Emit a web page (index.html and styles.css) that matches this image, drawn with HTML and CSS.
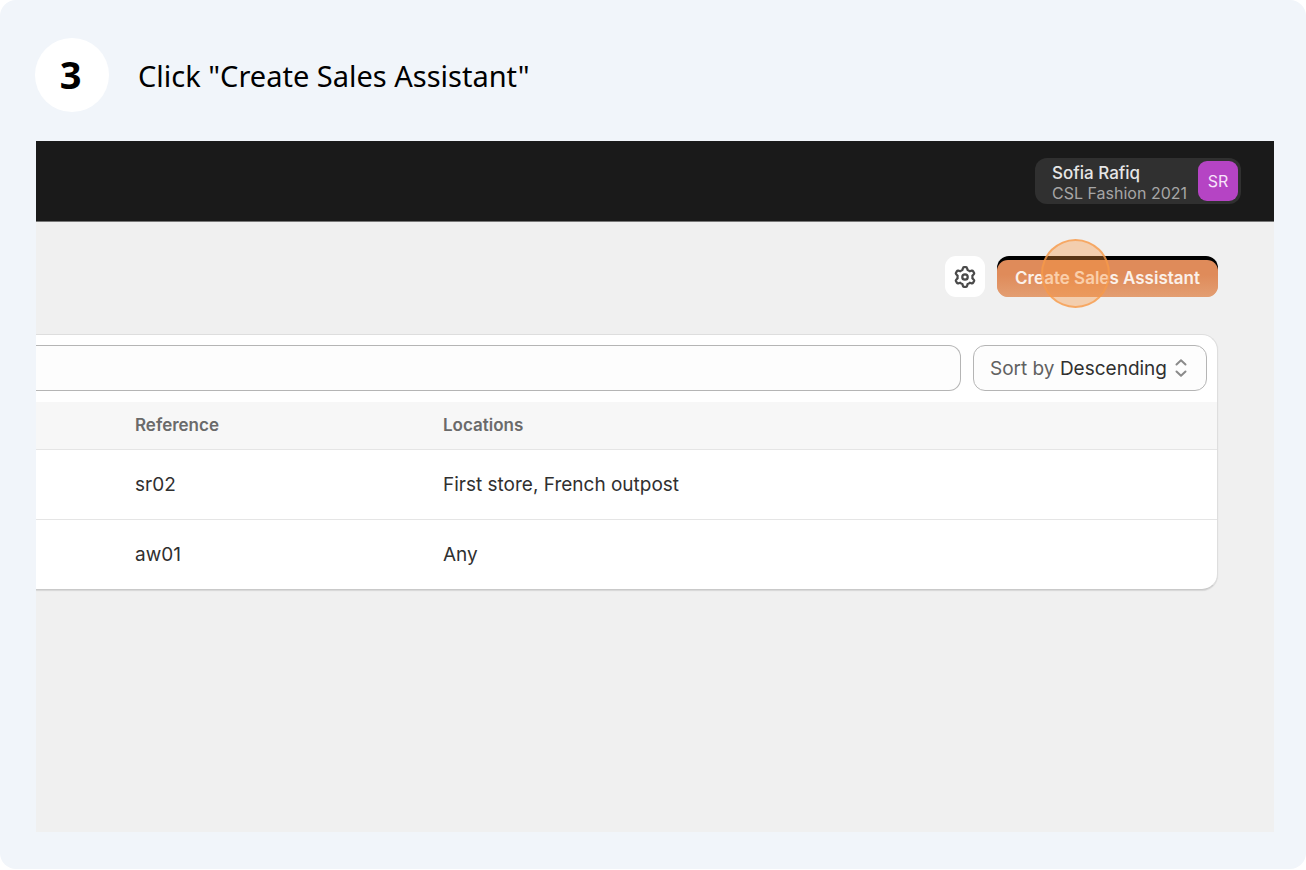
FILE: index.html
```html
<!DOCTYPE html>
<html lang="en">
<head>
<meta charset="utf-8">
<title>Click "Create Sales Assistant"</title>
<link rel="stylesheet" href="styles.css">
</head>
<body>
<main class="step">
  <header class="step-head">
    <span class="step-number">3</span>
    <h1 class="step-title">Click "Create Sales Assistant"</h1>
  </header>
  <section class="screen">
    <div class="topbar">
      <button class="account" type="button">
        <span class="account-text">
          <span class="account-name">Sofia Rafiq</span>
          <span class="account-store">CSL Fashion 2021</span>
        </span>
        <span class="avatar">SR</span>
      </button>
    </div>
    <div class="content">
      <div class="actions">
        <button class="settings" type="button" aria-label="Settings">
          <svg width="26" height="26" viewBox="-12 -12 24 24" fill="none" stroke="#4a4a4a" stroke-width="2.1" stroke-linejoin="round">
            <path d="M-2.4-6.5L-1.900-8.300Q-1.700-9.100-1-9.100H1Q1.700-9.100 1.900-8.300L2.400-6.500Q3.500-6.100 4.400-5.300L6.200-5.800Q7-6 7.400-5.400L8.400-3.700Q8.700-3.100 8.100-2.500L6.800-1.200Q7.100 0 6.800 1.200L8.100 2.500Q8.700 3.100 8.400 3.700L7.400 5.400Q7 6 6.200 5.800L4.400 5.300Q3.500 6.100 2.400 6.500L1.900 8.300Q1.700 9.100 1 9.100H-1Q-1.700 9.100-1.900 8.300L-2.400 6.500Q-3.500 6.100-4.400 5.300L-6.200 5.800Q-7 6-7.400 5.400L-8.400 3.700Q-8.700 3.100-8.100 2.500L-6.800 1.200Q-7.100 0-6.800-1.200L-8.100-2.500Q-8.700-3.100-8.400-3.700L-7.400-5.400Q-7-6-6.200-5.800L-4.400-5.300Q-3.500-6.100-2.400-6.500Z"/>
            <circle r="2.5"/>
          </svg>
        </button>
        <button class="create" type="button"><span class="create-face">Create Sales Assistant</span><span class="click-marker"></span></button>
      </div>
      <div class="panel">
        <div class="filters">
          <input class="search" type="text" aria-label="Search">
          <button class="sort" type="button">
            <span><span class="sort-label">Sort by</span> Descending</span>
            <svg width="14" height="20" viewBox="0 0 14 20" fill="none" stroke="#8a8a8a" stroke-width="2" stroke-linecap="round" stroke-linejoin="round">
              <path d="M2.500 6.500L7 2.200L11.500 6.500M2.500 13.500L7 17.800L11.500 13.500"/>
            </svg>
          </button>
        </div>
        <table class="assistants">
          <thead>
            <tr><th class="col-ref" scope="col">Reference</th><th scope="col">Locations</th></tr>
          </thead>
          <tbody>
            <tr><td class="col-ref">sr02</td><td>First store, French outpost</td></tr>
            <tr><td class="col-ref">aw01</td><td>Any</td></tr>
          </tbody>
        </table>
      </div>
    </div>
  </section>
</main>
</body>
</html>
```
FILE: styles.css
```css
* { box-sizing: border-box; }

body {
  margin: 0;
  background: #fff;
  font-family: Inter, "Liberation Sans", sans-serif;
  color: #303030;
}

button, input { font: inherit; color: inherit; }
button { cursor: pointer; }

.step {
  display: flex;
  flex-direction: column;
  min-height: calc(100vh - 1px);
  padding: 38px 32px 37px 36px;
  border-radius: 16px;
  background: #f1f5fa;
}

.step-head {
  display: flex;
  align-items: center;
  gap: 29px;
  margin: 0 0 29px -1px;
  font-family: "Noto Sans", sans-serif;
  color: #000;
}

.step-number {
  display: flex;
  align-items: center;
  justify-content: center;
  width: 74px;
  height: 74px;
  padding: 0 3px 3px 0;
  border-radius: 50%;
  background: #fff;
  font-size: 38px;
  font-weight: 700;
}

.step-title {
  margin: 0;
  padding-top: 2px;
  font-size: 29px;
  font-weight: 400;
  line-height: 40px;
}

.screen {
  display: flex;
  flex-direction: column;
  flex: 1;
  background: #f0f0f0;
  overflow: hidden;
}

.topbar {
  display: flex;
  justify-content: flex-end;
  padding: 17px 33px;
  border-bottom: 1px solid #777;
  background: #1a1a1a;
}

.account {
  display: flex;
  align-items: center;
  gap: 11px;
  height: 46px;
  padding: 0 3px 0 17px;
  border: 0;
  border-radius: 12px;
  background: #303030;
  text-align: left;
}

.account-text {
  display: flex;
  flex-direction: column;
  padding-top: 3px;
}

.account-name {
  font-size: 17px;
  font-weight: 500;
  line-height: 20px;
  color: #e6e6e6;
}

.account-store {
  font-size: 16px;
  line-height: 20px;
  color: #a6a6a6;
}

.avatar {
  display: grid;
  place-items: center;
  width: 40px;
  height: 40px;
  border-radius: 9px;
  background: #b544c4;
  font-size: 16px;
  color: #f7e3fa;
}

.content { padding: 34px 56px 0 0; }

.actions {
  display: flex;
  justify-content: flex-end;
  gap: 12px;
  margin-bottom: 37px;
}

.settings {
  display: grid;
  place-items: center;
  width: 40px;
  height: 41px;
  padding: 0;
  border: 0;
  border-radius: 11px;
  background: #fff;
}

.create {
  position: relative;
  height: 41px;
  padding: 4px 0 0;
  border: 0;
  border-radius: 12px;
  background: linear-gradient(#000 50%, #e39e72 50%);
}

.create-face {
  display: block;
  height: 37px;
  padding: 0 18px;
  border-radius: 11px;
  background: linear-gradient(#df8b5a 40%, #e39e72);
  font-size: 17px;
  font-weight: 600;
  line-height: 36px;
  color: #fbf1ea;
}

.click-marker {
  position: absolute;
  top: -17px;
  left: 44px;
  width: 69px;
  height: 69px;
  border: 2px solid rgba(247, 155, 75, 0.75);
  border-radius: 50%;
  background: rgba(249, 146, 58, 0.36);
}

.panel {
  overflow: hidden;
  border: 1px solid #dedede;
  border-left: 0;
  border-bottom-color: #c9c9c9;
  border-radius: 0 16px 16px 0;
  background: #fff;
  box-shadow: 0 1px 1px #d6d6d6;
}

.filters {
  display: flex;
  gap: 12px;
  padding: 10px 10px 11px 0;
}

.search {
  flex: 1;
  min-width: 0;
  border: 1px solid #b5b5b5;
  border-left: 0;
  border-radius: 0 12px 12px 0;
  background: #fdfdfd;
}

.sort {
  display: flex;
  align-items: center;
  gap: 7px;
  height: 46px;
  padding: 0 18px 0 16px;
  border: 1px solid #b5b5b5;
  border-radius: 12px;
  background: #fdfdfd;
  font-size: 19px;
}

.sort-label { color: #616161; }

.assistants {
  width: 100%;
  border-collapse: collapse;
  text-align: left;
}

.assistants th {
  height: 47px;
  padding: 0;
  background: #f7f7f7;
  font-size: 17px;
  font-weight: 600;
  color: #6a6a6a;
}

.assistants td {
  height: 70px;
  padding: 0;
  border-top: 1px solid #e5e5e5;
  font-size: 19px;
}

.assistants .col-ref {
  width: 407px;
  padding-left: 99px;
}
```
